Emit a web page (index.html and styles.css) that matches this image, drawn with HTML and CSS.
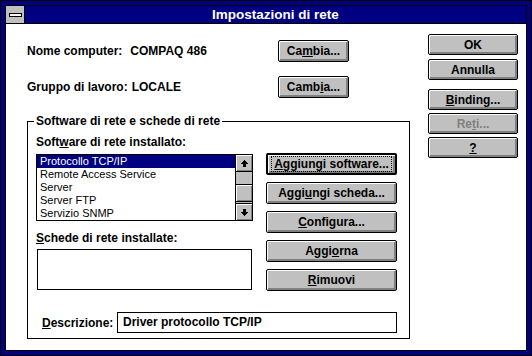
FILE: index.html
```html
<!DOCTYPE html>
<html lang="it">
<head>
<meta charset="utf-8">
<title>Impostazioni di rete</title>
<link rel="stylesheet" href="styles.css">
</head>
<body>
<div class="window">
  <div class="frame">
    <div class="titlebar">
      <div class="sysmenu"><span class="sysbar"></span></div>
      <div class="title">Impostazioni di rete</div>
    </div>
    <div class="client">
      <div class="main">
        <div class="row">
          <div class="info"><span class="key">Nome computer:</span><span class="val val-name">COMPAQ 486</span></div>
          <button class="btn cambia">Ca<u>m</u>bia...</button>
        </div>
        <div class="row">
          <div class="info"><span class="key">Gruppo di lavoro:</span><span class="val val-group">LOCALE</span></div>
          <button class="btn cambia">Camb<u>i</u>a...</button>
        </div>
        <fieldset class="group">
          <legend>Software di rete e schede di rete</legend>
          <div class="group-body">
            <div class="lists">
              <div class="label">Soft<u>w</u>are di rete installato:</div>
              <div class="listbox list-sw">
                <ul class="items">
                  <li class="sel">Protocollo TCP/IP</li>
                  <li>Remote Access Service</li>
                  <li>Server</li>
                  <li>Server FTP</li>
                  <li>Servizio SNMP</li>
                </ul>
                <div class="scrollbar">
                  <div class="sb-btn sb-up"><svg width="7" height="7" viewBox="0 0 7 7" shape-rendering="crispEdges"><path d="M3 0H4V1H5V2H6V3H7V4H5V7H2V4H0V3H1V2H2V1H3Z"/></svg></div>
                  <div class="sb-track"><div class="sb-thumb"></div></div>
                  <div class="sb-btn sb-down"><svg width="7" height="7" viewBox="0 0 7 7" shape-rendering="crispEdges"><path d="M2 0H5V3H7V4H6V5H5V6H4V7H3V6H2V5H1V4H0V3H2Z"/></svg></div>
                </div>
              </div>
              <div class="label label-cards"><u>S</u>chede di rete installate:</div>
              <div class="listbox list-cards"></div>
            </div>
            <div class="actions">
              <button class="btn default"><span class="focus"><u>A</u>ggiungi software...</span></button>
              <button class="btn">Aggi<u>u</u>ngi scheda...</button>
              <button class="btn"><u>C</u>onfigura...</button>
              <button class="btn">Aggi<u>o</u>rna</button>
              <button class="btn"><u>R</u>imuovi</button>
            </div>
          </div>
          <div class="desc-row">
            <span class="desc-label"><u>D</u>escrizione:</span>
            <div class="desc-box">Driver protocollo TCP/IP</div>
          </div>
        </fieldset>
      </div>
      <div class="side">
        <button class="btn">OK</button>
        <button class="btn annulla">Annulla</button>
        <button class="btn binding"><u>B</u>inding...</button>
        <button class="btn disabled">Re<u>t</u>i...</button>
        <button class="btn"><u>?</u></button>
      </div>
    </div>
  </div>
</div>
</body>
</html>
```

FILE: styles.css
```css
* { box-sizing: border-box; }
html, body { margin: 0; padding: 0; }
body {
  width: 532px;
  height: 356px;
  overflow: hidden;
  font-family: "Liberation Sans", Arial, sans-serif;
  font-size: 12px;
  font-weight: bold;
  color: #000;
}
u {
  text-decoration: underline;
  text-decoration-thickness: 1px;
  text-underline-offset: 1px;
}
.window {
  width: 532px;
  height: 356px;
  border: 1px solid #000;
  background: #000080;
  padding: 4px;
}
.frame {
  height: 100%;
  border: 1px solid #000;
  display: flex;
  flex-direction: column;
  background: #fff;
}
.titlebar {
  height: 18px;
  flex: none;
  display: flex;
  border-bottom: 1px solid #000;
  background: #000080;
}
.sysmenu {
  width: 19px;
  flex: none;
  background: #c0c0c0;
  border-right: 1px solid #000;
  display: flex;
  align-items: center;
  justify-content: center;
}
.sysbar {
  width: 13px;
  height: 4px;
  border: 1px solid #000;
  background: #fff;
  margin-top: 1px;
}
.title {
  flex: 1;
  text-align: center;
  color: #fff;
  font-size: 13.5px;
  line-height: 17px;
}
.client {
  flex: 1;
  display: flex;
  padding: 10px 8px 0 21px;
}
.main {
  width: 383px;
  margin-top: 6px;
}
.row {
  display: flex;
  align-items: center;
  height: 22px;
}
.row + .row { margin-top: 14px; }
.info { width: 251px; white-space: nowrap; }
.val-name { margin-left: 8px; }
.val-group { margin-left: 4px; }
.btn {
  font: inherit;
  color: #000;
  background: #c0c0c0;
  border: 1px solid #000;
  border-radius: 2px;
  box-shadow: inset 1px 1px 0 #fff, inset -1px -1px 0 #808080, inset -2px -2px 0 #808080;
  padding: 0;
  margin: 0;
  height: 22px;
  display: flex;
  align-items: center;
  justify-content: center;
  line-height: 14px;
  white-space: nowrap;
}
.cambia { width: 71px; }
.group {
  margin: 16px 0 0;
  padding: 7px 11px 5px 8px;
  border: 1px solid #000;
  min-width: 0;
}
.group legend {
  padding: 0 2px;
  margin-left: -2px;
  line-height: 14px;
}
.group-body { display: flex; }
.lists { width: 217px; flex: none; }
.label { height: 15px; line-height: 15px; white-space: nowrap; }
.label-cards { margin-top: 10px; }
.listbox {
  border: 1px solid #000;
  background: #fff;
  display: flex;
}
.list-sw { height: 67px; margin-top: 4px; }
.list-cards { height: 41px; width: 215px; margin: 3px 0 0 1px; }
.items {
  list-style: none;
  margin: 0;
  padding: 0;
  flex: 1;
  font-weight: normal;
  font-size: 11px;
  line-height: 13px;
}
.items li {
  height: 13px;
  padding-left: 3px;
  white-space: nowrap;
}
.items li.sel { background: #000080; color: #fff; }
.scrollbar {
  width: 17px;
  flex: none;
  border-left: 1px solid #000;
  background: #c0c0c0;
  display: flex;
  flex-direction: column;
}
.sb-btn {
  height: 17px;
  flex: none;
  background: #c0c0c0;
  box-shadow: inset 1px 1px 0 #fff, inset -1px -1px 0 #808080;
  display: flex;
  align-items: center;
  justify-content: center;
}
.sb-up { border-bottom: 1px solid #000; }
.sb-down { border-top: 1px solid #000; }
.sb-track {
  flex: 1;
  display: flex;
  flex-direction: column;
  justify-content: flex-end;
}
.sb-thumb {
  height: 18px;
  border-top: 1px solid #000;
  border-bottom: 1px solid #000;
  box-shadow: inset 1px 1px 0 #fff, inset -1px -1px 0 #808080;
  margin-bottom: 1px;
}
.actions {
  width: 131px;
  flex: none;
  margin: 18px 0 0 13px;
  display: flex;
  flex-direction: column;
  gap: 7px;
}
.actions .btn { width: 100%; }
.default {
  border-width: 2px;
}
.focus {
  outline: 1px dotted #000;
  padding: 0 2px;
}
.desc-row {
  display: flex;
  align-items: center;
  margin-top: 21px;
}
.desc-label { margin-left: 6px; width: 75px; flex: none; }
.desc-box {
  width: 280px;
  height: 21px;
  border: 1px solid #000;
  padding-left: 5px;
  line-height: 19px;
}
.side {
  width: 90px;
  margin-left: auto;
  display: flex;
  flex-direction: column;
}
.side .btn { height: 21px; width: 100%; margin-top: 3px; }
.side .btn:first-child { margin-top: 0; }
.side .annulla { margin-top: 4px; }
.side .binding { margin-top: 9px; }
.side .disabled { color: #808080; }
```
